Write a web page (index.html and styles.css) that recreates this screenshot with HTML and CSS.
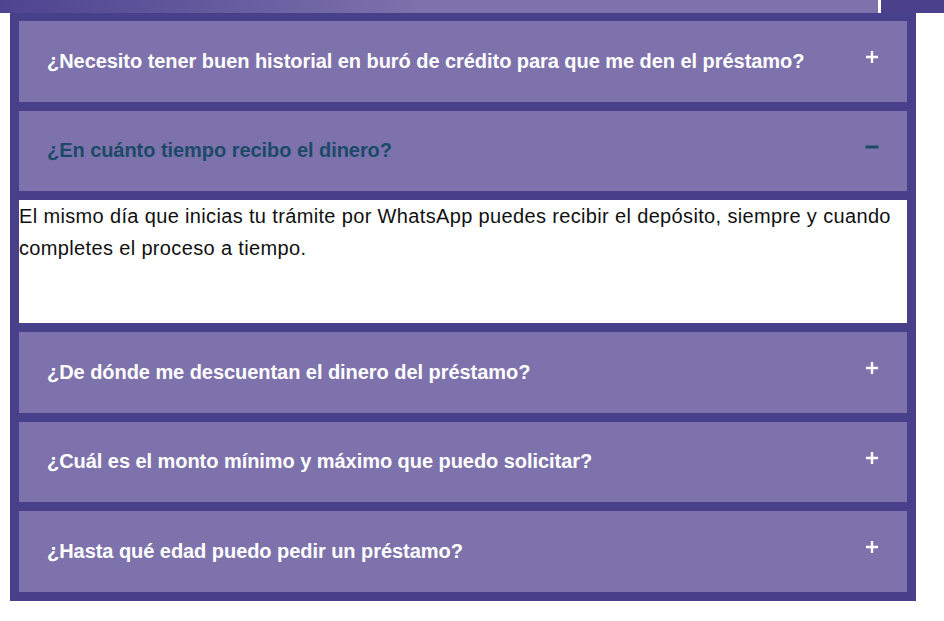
FILE: index.html
```html
<!DOCTYPE html>
<html lang="es">
<head>
<meta charset="utf-8">
<title>Preguntas frecuentes</title>
<link rel="stylesheet" href="styles.css">
</head>
<body>
<div class="topbar">
  <div class="topbar-fade"></div>
  <div class="topbar-line"></div>
  <div class="topbar-end"></div>
</div>
<section class="faq">
  <div class="faq-item">
    <span class="faq-q">¿Necesito tener buen historial en buró de crédito para que me den el préstamo?</span>
    <svg class="faq-icon" viewBox="0 0 14 14" width="14" height="14"><path d="M7 1v12M1 7h12" stroke="#ffffff" stroke-width="2.4" fill="none"/></svg>
  </div>
  <div class="faq-item active">
    <span class="faq-q">¿En cuánto tiempo recibo el dinero?</span>
    <svg class="faq-icon minus" viewBox="0 0 14 14" width="14" height="14"><path d="M0.5 7h13" stroke="#1b4a68" stroke-width="3" fill="none"/></svg>
  </div>
  <div class="faq-answer">El mismo día que inicias tu trámite por WhatsApp puedes recibir el depósito, siempre y cuando completes el proceso a tiempo.</div>
  <div class="faq-item">
    <span class="faq-q">¿De dónde me descuentan el dinero del préstamo?</span>
    <svg class="faq-icon" viewBox="0 0 14 14" width="14" height="14"><path d="M7 1v12M1 7h12" stroke="#ffffff" stroke-width="2.4" fill="none"/></svg>
  </div>
  <div class="faq-item">
    <span class="faq-q">¿Cuál es el monto mínimo y máximo que puedo solicitar?</span>
    <svg class="faq-icon" viewBox="0 0 14 14" width="14" height="14"><path d="M7 1v12M1 7h12" stroke="#ffffff" stroke-width="2.4" fill="none"/></svg>
  </div>
  <div class="faq-item">
    <span class="faq-q">¿Hasta qué edad puedo pedir un préstamo?</span>
    <svg class="faq-icon" viewBox="0 0 14 14" width="14" height="14"><path d="M7 1v12M1 7h12" stroke="#ffffff" stroke-width="2.4" fill="none"/></svg>
  </div>
</section>
</body>
</html>
```
FILE: styles.css
```css
html, body {
  margin: 0;
  padding: 0;
  background: #ffffff;
}
body {
  font-family: "Liberation Sans", Arial, sans-serif;
}
.topbar {
  display: flex;
  height: 13px;
}
.topbar-fade {
  flex: 1;
  background: linear-gradient(90deg, #4e4490 0%, #6a5fa1 30%, #7e72ac 48%, #7e72ac 100%);
}
.topbar-line {
  width: 3px;
  background: #ffffff;
}
.topbar-end {
  width: 63px;
  background: #4a408c;
}
.faq {
  width: 888px;
  margin-left: 10px;
  padding: 8px 9px 9px 9px;
  background: #49408c;
  display: flex;
  flex-direction: column;
  gap: 9px;
}
.faq-item {
  height: 80.5px;
  background: #7e72ac;
  display: flex;
  align-items: center;
  justify-content: space-between;
  padding: 0 28px;
}
.faq-q {
  color: #ffffff;
  font-size: 20px;
  font-weight: 700;
  letter-spacing: -0.05px;
}
.faq-item.active .faq-q {
  color: #1b4a68;
}
.faq-icon {
  margin-top: -8px;
  flex: none;
}
.faq-icon.minus {
  margin-top: -7px;
}
.faq-answer {
  height: 123px;
  background: #ffffff;
  color: #111111;
  font-size: 20px;
  letter-spacing: 0.35px;
  line-height: 32px;
  box-sizing: border-box;
  padding-right: 10px;
}
```
